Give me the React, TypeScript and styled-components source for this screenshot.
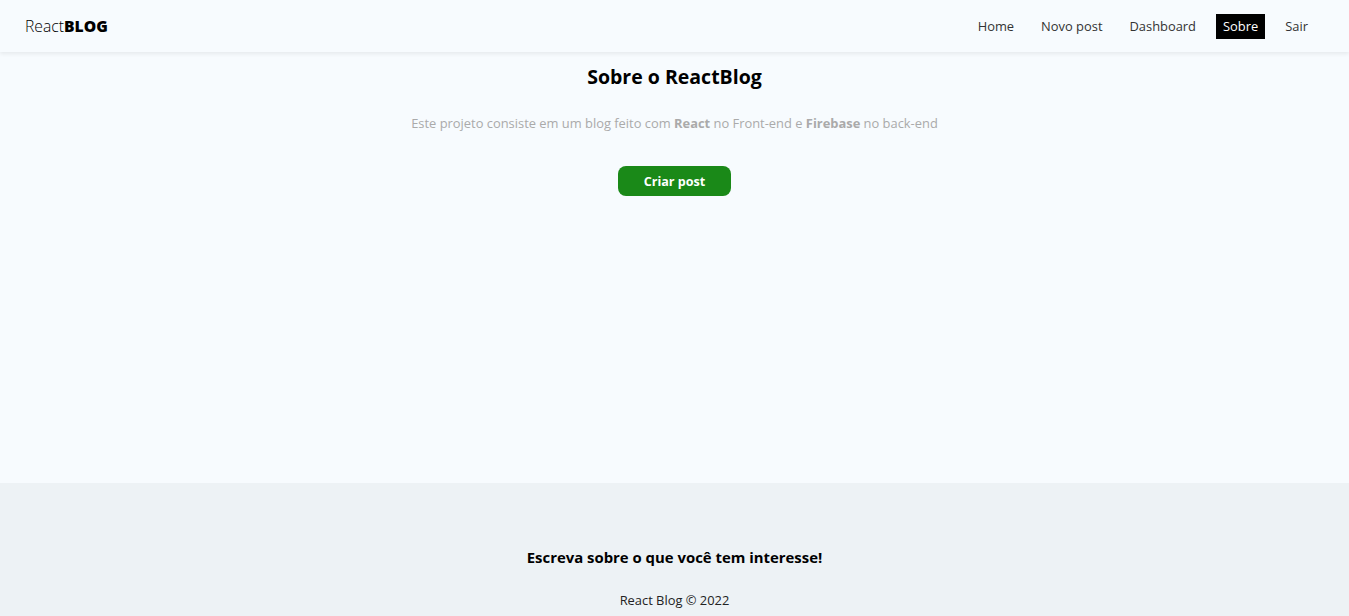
import React from "react";
import styled, { createGlobalStyle } from "styled-components";

const Global = createGlobalStyle`
  * { box-sizing: border-box; margin: 0; padding: 0; }
  body {
    font-family: "Open Sans", "Noto Sans", sans-serif;
    background: #f7fbfe;
    color: #000;
  }
`;

const Page = styled.div`
  display: flex;
  flex-direction: column;
`;

const Navbar = styled.nav`
  height: 52px;
  display: flex;
  align-items: center;
  justify-content: space-between;
  padding: 0 34px 0 25px;
  box-shadow: rgba(0, 0, 0, 0.07) 0px 2px 4px;
  position: relative;
  z-index: 1;
`;

const Brand = styled.a`
  font-size: 15.7px;
  color: #000;
  text-decoration: none;
  font-weight: 300;
  strong { font-weight: 800; }
`;

const Links = styled.ul`
  list-style: none;
  display: flex;
  gap: 13px;
`;

const NavLink = styled.a<{ $active?: boolean }>`
  display: block;
  font-size: 12.9px;
  padding: 4px 7px;
  line-height: 17px;
  text-decoration: none;
  color: ${(p) => (p.$active ? "#fff" : "#333")};
  background: ${(p) => (p.$active ? "#000" : "transparent")};
`;

const Container = styled.main`
  min-height: 70vh;
  display: flex;
  flex-direction: column;
  align-items: center;
  padding-top: 12px;
`;

const Title = styled.h2`
  font-size: 19.5px;
  font-weight: 700;
  line-height: 26px;
`;

const Text = styled.p`
  margin-top: 24px;
  font-size: 12.9px;
  color: #aaa;
  line-height: 18px;
  b { font-weight: 700; }
`;

const Button = styled.a`
  margin-top: 34px;
  width: 113px;
  height: 30px;
  display: flex;
  align-items: center;
  justify-content: center;
  background: #1a8918;
  color: #fff;
  border-radius: 8px;
  font-weight: 700;
  font-size: 12.6px;
  text-decoration: none;
`;

const Footer = styled.footer`
  height: 200px;
  background: #edf2f5;
  display: flex;
  flex-direction: column;
  align-items: center;
  justify-content: center;
`;

const FooterTitle = styled.h3`
  font-size: 14.9px;
  font-weight: 700;
  line-height: 20px;
  margin-top: -10px;
`;

const FooterText = styled.p`
  margin-top: 24px;
  font-size: 12.9px;
  color: #222;
  line-height: 18px;
`;

export default function App() {
  return (
    <Page>
      <Global />
      <Navbar>
        <Brand href="#">
          React<strong>BLOG</strong>
        </Brand>
        <Links>
          <li><NavLink href="#">Home</NavLink></li>
          <li><NavLink href="#">Novo post</NavLink></li>
          <li><NavLink href="#">Dashboard</NavLink></li>
          <li><NavLink href="#" $active>Sobre</NavLink></li>
          <li><NavLink href="#">Sair</NavLink></li>
        </Links>
      </Navbar>
      <Container>
        <Title>Sobre o ReactBlog</Title>
        <Text>
          Este projeto consiste em um blog feito com <b>React</b> no Front-end e <b>Firebase</b> no back-end
        </Text>
        <Button href="#">Criar post</Button>
      </Container>
      <Footer>
        <FooterTitle>Escreva sobre o que você tem interesse!</FooterTitle>
        <FooterText>React Blog © 2022</FooterText>
      </Footer>
    </Page>
  );
}
